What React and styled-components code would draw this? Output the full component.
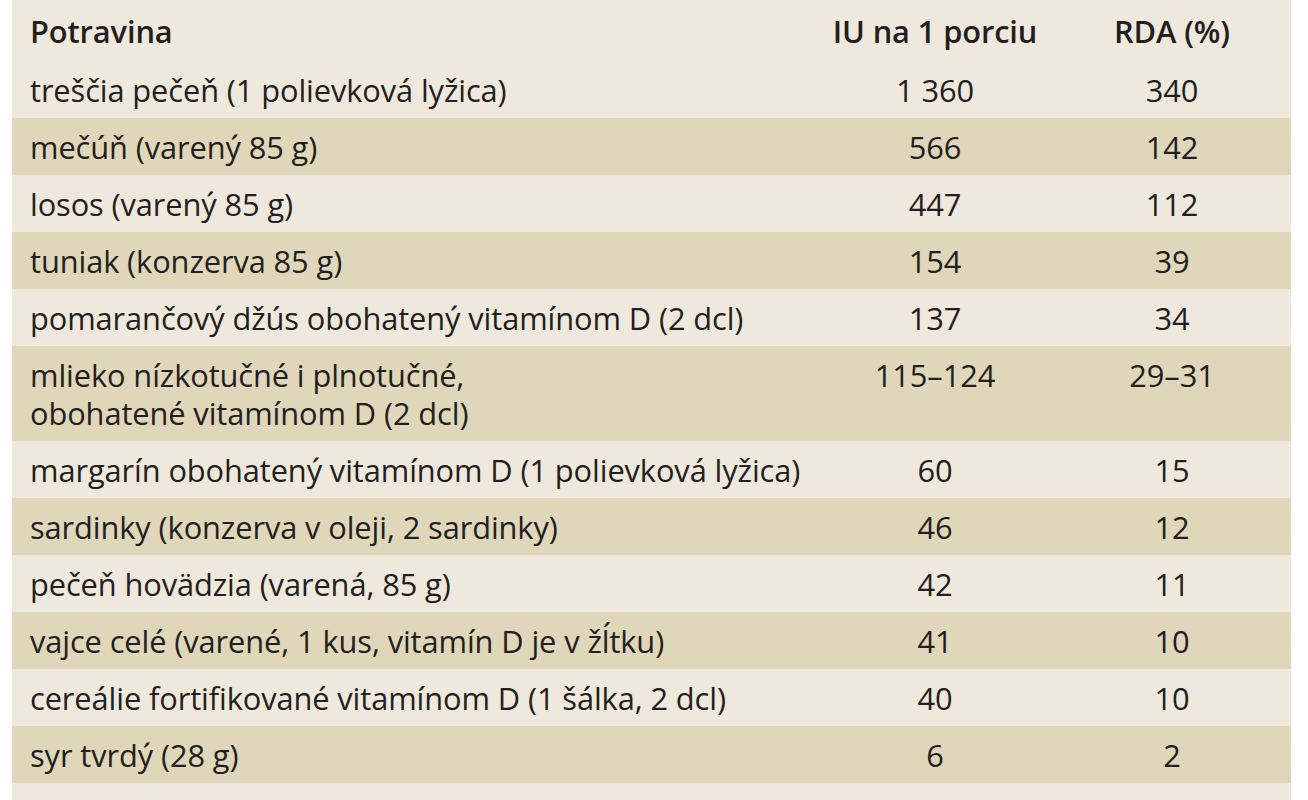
import React from 'react';
import styled, { createGlobalStyle } from 'styled-components';

const rows = [
  { food: 'treščia pečeň (1 polievková lyžica)', iu: '1 360', rda: '340' },
  { food: 'mečúň (varený 85 g)', iu: '566', rda: '142' },
  { food: 'losos (varený 85 g)', iu: '447', rda: '112' },
  { food: 'tuniak (konzerva 85 g)', iu: '154', rda: '39' },
  { food: 'pomarančový džús obohatený vitamínom D (2 dcl)', iu: '137', rda: '34' },
  { food: ['mlieko nízkotučné i plnotučné,', 'obohatené vitamínom D (2 dcl)'], iu: '115–124', rda: '29–31' },
  { food: 'margarín obohatený vitamínom D (1 polievková lyžica)', iu: '60', rda: '15' },
  { food: 'sardinky (konzerva v oleji, 2 sardinky)', iu: '46', rda: '12' },
  { food: 'pečeň hovädzia (varená, 85 g)', iu: '42', rda: '11' },
  { food: 'vajce celé (varené, 1 kus, vitamín D je v žĺtku)', iu: '41', rda: '10' },
  { food: 'cereálie fortifikované vitamínom D (1 šálka, 2 dcl)', iu: '40', rda: '10' },
  { food: 'syr tvrdý (28 g)', iu: '6', rda: '2' },
];

const GlobalStyle = createGlobalStyle`
  body {
    margin: 0;
    background: #ffffff;
    font-family: "Open Sans", "Noto Sans", sans-serif;
    color: #231f20;
  }
`;

const Page = styled.div`
  padding: 0 17px 0 12px;
`;

const Table = styled.div`
  background: #efe8dc;
  min-height: 800px;
`;

const Row = styled.div`
  display: grid;
  grid-template-columns: 805px 236px 1fr;
  background: ${(p) => (p.$shaded ? '#e0d6b9' : 'transparent')};
  padding: ${(p) => (p.$head ? '12px 0 11px' : '9.5px 0 9.5px')};
  font-size: 30.8px;
  line-height: 38px;
  letter-spacing: -0.1px;
  font-weight: ${(p) => (p.$head ? 600 : 400)};
`;

const Food = styled.div`
  padding-left: 18px;
  white-space: nowrap;
`;

const Line = styled.div`
  display: block;
`;

const Num = styled.div`
  text-align: center;
`;

function App() {
  return (
    <Page>
      <GlobalStyle />
      <Table>
        <Row $head>
          <Food>Potravina</Food>
          <Num>IU na 1 porciu</Num>
          <Num>RDA (%)</Num>
        </Row>
        {rows.map((r, i) => (
          <Row key={i} $shaded={i % 2 === 1}>
            <Food>
              {Array.isArray(r.food)
                ? r.food.map((line) => <Line key={line}>{line}</Line>)
                : r.food}
            </Food>
            <Num>{r.iu}</Num>
            <Num>{r.rda}</Num>
          </Row>
        ))}
      </Table>
    </Page>
  );
}

export default App;
